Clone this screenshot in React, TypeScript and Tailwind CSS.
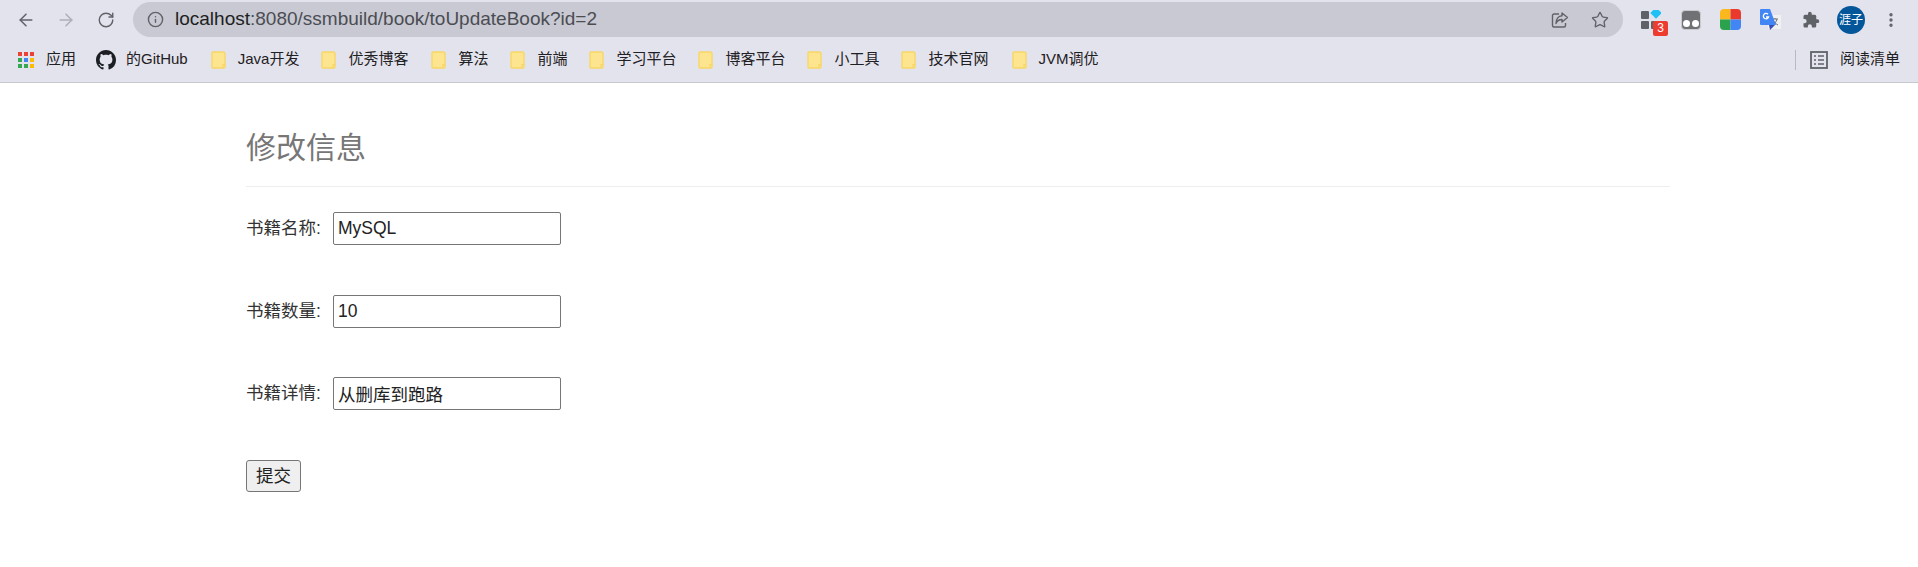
import React from "react";
import { ArrowLeft, ArrowRight, RotateCw, Info, Star, EllipsisVertical } from "lucide-react";

const font = "font-['Liberation_Sans','Noto_Sans_CJK_SC',sans-serif]";

const Folder = () => (
  <svg width="15" height="18" viewBox="0 0 15 18" className="shrink-0">
    <path d="M2 1h10a2 2 0 0 1 2 2v13a1 1 0 0 1-1 1H2a1 1 0 0 1-1-1V2a1 1 0 0 1 1-1z" fill="#fde58f" stroke="#f8d666" strokeWidth="1.4" />
    <path d="M12 17v-3.5h2.5" fill="none" stroke="#f8d666" strokeWidth="1.2" />
  </svg>
);

const GithubMark = () => (
  <svg width="20" height="20" viewBox="0 0 16 16" fill="#1b1f23" className="shrink-0">
    <path d="M8 0C3.58 0 0 3.58 0 8c0 3.54 2.29 6.53 5.47 7.59.4.07.55-.17.55-.38 0-.19-.01-.82-.01-1.49-2.01.37-2.53-.49-2.69-.94-.09-.23-.48-.94-.82-1.13-.28-.15-.68-.52-.01-.53.63-.01 1.08.58 1.23.82.72 1.21 1.87.87 2.33.66.07-.52.28-.87.51-1.07-1.78-.2-3.64-.89-3.64-3.95 0-.87.31-1.59.82-2.15-.08-.2-.36-1.02.08-2.12 0 0 .67-.21 2.2.82.64-.18 1.32-.27 2-.27s1.36.09 2 .27c1.53-1.04 2.2-.82 2.2-.82.44 1.1.16 1.92.08 2.12.51.56.82 1.27.82 2.15 0 3.07-1.87 3.75-3.65 3.95.29.25.54.73.54 1.48 0 1.07-.01 1.93-.01 2.2 0 .21.15.46.55.38A8.01 8.01 0 0 0 16 8c0-4.42-3.58-8-8-8z" />
  </svg>
);

const AppsGrid = () => (
  <svg width="16" height="16" viewBox="0 0 16 16" className="shrink-0">
    <rect x="0" y="0" width="4" height="4" fill="#ea4335" />
    <rect x="6" y="0" width="4" height="4" fill="#ea4335" />
    <rect x="12" y="0" width="4" height="4" fill="#ea4335" />
    <rect x="0" y="6" width="4" height="4" fill="#34a853" />
    <rect x="6" y="6" width="4" height="4" fill="#4285f4" />
    <rect x="12" y="6" width="4" height="4" fill="#fbbc05" />
    <rect x="0" y="12" width="4" height="4" fill="#34a853" />
    <rect x="6" y="12" width="4" height="4" fill="#34a853" />
    <rect x="12" y="12" width="4" height="4" fill="#fbbc05" />
  </svg>
);

const ShareIcon = () => (
  <svg width="18" height="18" viewBox="0 0 18 18" fill="none" stroke="#5f6368" strokeWidth="1.4" className="shrink-0">
    <path d="M8 3H3a1.5 1.5 0 0 0-1.5 1.5v10A1.5 1.5 0 0 0 3 16h10a1.5 1.5 0 0 0 1.5-1.5V12" />
    <path d="M11 2l5.5 4.5L11 11V8.500C8 8.500 6 10 5 12.500 5 8 7.500 5 11 4.800z" strokeLinejoin="round" />
  </svg>
);

const BlocksExt = () => (
  <div className="relative w-[27px] h-[32px] shrink-0">
    <svg width="20" height="24" viewBox="0 0 20 24" className="absolute left-0 top-[6px]">
      <rect x="0" y="1" width="8" height="8" rx="1" fill="#5f6368" />
      <rect x="0" y="11" width="8" height="8" rx="1" fill="#5f6368" />
      <rect x="10" y="11" width="8" height="8" rx="1" fill="#5f6368" />
      <rect x="11" y="-1" width="8" height="8" fill="#1ec0f5" transform="rotate(45 15 3)" />
    </svg>
    <div className="absolute left-[12px] top-[17px] w-[15px] h-[15px] rounded-[2px] bg-[#ee3b30] text-white text-[12px] leading-[15px] text-center">3</div>
  </div>
);

const GhostExt = () => (
  <svg width="20" height="20" viewBox="0 0 20 20" className="shrink-0">
    <rect x="0.500" y="0.500" width="19" height="19" rx="3.500" fill="#6f7175" stroke="#c9cacd" />
    <circle cx="5.500" cy="13.500" r="3.500" fill="#fff" />
    <circle cx="14.500" cy="13.500" r="3.500" fill="#fff" />
  </svg>
);

const ColorExt = () => (
  <svg width="21" height="21" viewBox="0 0 21 21" className="shrink-0">
    <path d="M10.500 0H4a4 4 0 0 0-4 4v6.500h10.500z" fill="#fbb81e" />
    <path d="M10.500 0H17a4 4 0 0 1 4 4v6.500H10.500z" fill="#ea3a2e" />
    <path d="M10.500 10.500H0V17a4 4 0 0 0 4 4h6.500z" fill="#2ba24c" />
    <path d="M10.500 10.500H21V17a4 4 0 0 1-4 4h-6.500z" fill="#4285f4" />
  </svg>
);

const TranslateExt = () => (
  <svg width="21" height="22" viewBox="0 0 21 22" className="shrink-0">
    <rect x="8" y="6" width="13" height="14" fill="#f1f1f1" />
    <path d="M12 10h6M15 9v1M13 16c2-1 3-3 4-6M13 11c1 2 3 4 5 5" stroke="#6f7378" strokeWidth="1" fill="none" />
    <path d="M1 0h9l6 16H1a1 1 0 0 1-1-1V1a1 1 0 0 1 1-1z" fill="#4285f4" />
    <path d="M9 16h6l-5 5z" fill="#3b50b5" />
    <path d="M8 5.300A2.700 2.700 0 1 0 8.600 8H6" fill="none" stroke="#fff" strokeWidth="1.300" />
  </svg>
);

const PuzzleIcon = () => (
  <svg width="18" height="18" viewBox="0 0 24 24" fill="#5f6368" className="shrink-0">
    <path d="M20.500 11H19V7a2 2 0 0 0-2-2h-4V3.500a2.500 2.500 0 0 0-5 0V5H4a2 2 0 0 0-2 2v3.800h1.500a2.700 2.700 0 0 1 0 5.400H2V20a2 2 0 0 0 2 2h3.800v-1.500a2.700 2.700 0 0 1 5.400 0V22H17a2 2 0 0 0 2-2v-4h1.500a2.500 2.500 0 0 0 0-5z" />
  </svg>
);

const ReadingList = () => (
  <svg width="18" height="18" viewBox="0 0 18 18" fill="none" className="shrink-0">
    <rect x="1" y="1" width="16" height="16" stroke="#5f6368" strokeWidth="1.800" />
    <path d="M4 5h2M8 5h6M4 9h2M8 9h6M4 13h2M8 13h6" stroke="#5f6368" strokeWidth="1.500" />
  </svg>
);

const bookmarks = [
  { label: "Java开发", gap: "mr-[22px]" },
  { label: "优秀博客", gap: "mr-[23px]" },
  { label: "算法", gap: "mr-[22px]" },
  { label: "前端", gap: "mr-[22px]" },
  { label: "学习平台", gap: "mr-[22px]" },
  { label: "博客平台", gap: "mr-[22px]" },
  { label: "小工具", gap: "mr-[22px]" },
  { label: "技术官网", gap: "mr-[23px]" },
  { label: "JVM调优", gap: "" },
];

const fields = [
  { label: "书籍名称:", value: "MySQL", gap: "mb-[50px]" },
  { label: "书籍数量:", value: "10", gap: "mb-[49px]" },
  { label: "书籍详情:", value: "从删库到跑路", gap: "mb-[50px]" },
];

export default function App() {
  return (
    <div className={`${font} min-h-[567px] bg-white`}>
      <div className="h-[83px] bg-[#e2e3ec] border-b border-[#c8c9ce]">
        <div className="h-[37px] flex items-end">
          <div className="w-[133px] h-[35px] flex items-center pl-[16px] gap-[20px] shrink-0">
            <ArrowLeft size={20} strokeWidth={1.8} color="#5f6368" />
            <ArrowRight size={20} strokeWidth={1.8} color="#adafb6" />
            <RotateCw size={18} strokeWidth={1.9} color="#5f6368" className="ml-[1px]" />
          </div>
          <div className="w-[1490px] h-[35px] rounded-full bg-[#c8c9d2] flex items-center pl-[14px] pr-[14px] shrink-0">
            <Info size={17} strokeWidth={2} color="#5f6368" />
            <div className="ml-[11px] text-[19px] text-[#4b4d53]">
              <span className="text-[#1d1e21]">localhost</span>:8080/ssmbuild/book/toUpdateBook?id=2
            </div>
            <div className="ml-auto flex items-center gap-[22px]">
              <ShareIcon />
              <Star size={18} strokeWidth={1.8} color="#5f6368" />
            </div>
          </div>
          <div className="flex-1 h-[35px] flex items-center pl-[18px]">
            <BlocksExt />
            <div className="ml-[13px]"><GhostExt /></div>
            <div className="ml-[19px]"><ColorExt /></div>
            <div className="ml-[19px]"><TranslateExt /></div>
            <div className="ml-[21px]"><PuzzleIcon /></div>
            <div className="ml-[17px] w-[28px] h-[28px] rounded-full bg-[#04569b] text-white text-[12px] leading-[28px] text-center shrink-0">涯子</div>
            <EllipsisVertical size={18} strokeWidth={2.5} color="#5f6368" className="ml-[17px]" />
          </div>
        </div>
        <div className="h-[45px] flex items-center text-[15px] text-[#1f2023] pl-[18px]">
          <AppsGrid />
          <span className="ml-[12px] mr-[20px]">应用</span>
          <GithubMark />
          <span className="ml-[10px] mr-[23px]">的GitHub</span>
          {bookmarks.map((b) => (
            <React.Fragment key={b.label}>
              <Folder />
              <span className={`ml-[12px] ${b.gap}`}>{b.label}</span>
            </React.Fragment>
          ))}
          <div className="ml-auto flex items-center pr-[18px]">
            <div className="w-px h-[20px] bg-[#b9bac0]" />
            <div className="ml-[14px]"><ReadingList /></div>
            <span className="ml-[12px]">阅读清单</span>
          </div>
        </div>
      </div>

      <main className="ml-[246px] mr-[248px] text-[17.5px] text-[#333]">
        <div className="pt-[45px] pb-[18px] border-b border-[#eeeeee] mb-[25px]">
          <h1 className="text-[30px] leading-[40px] text-[#777]">修改信息</h1>
        </div>
        <form>
          {fields.map((f) => (
            <div key={f.label} className={`flex items-center ${f.gap}`}>
              <label className="w-[87px] shrink-0">{f.label}</label>
              <input
                readOnly
                value={f.value}
                className="w-[228px] h-[33px] px-[4px] border border-[#767676] rounded-[2px] text-[#222] outline-none"
              />
            </div>
          ))}
          <button type="button" className="w-[55px] h-[32px] bg-[#efefef] border border-[#767676] rounded-[3px] text-[#222]">提交</button>
        </form>
      </main>
    </div>
  );
}
